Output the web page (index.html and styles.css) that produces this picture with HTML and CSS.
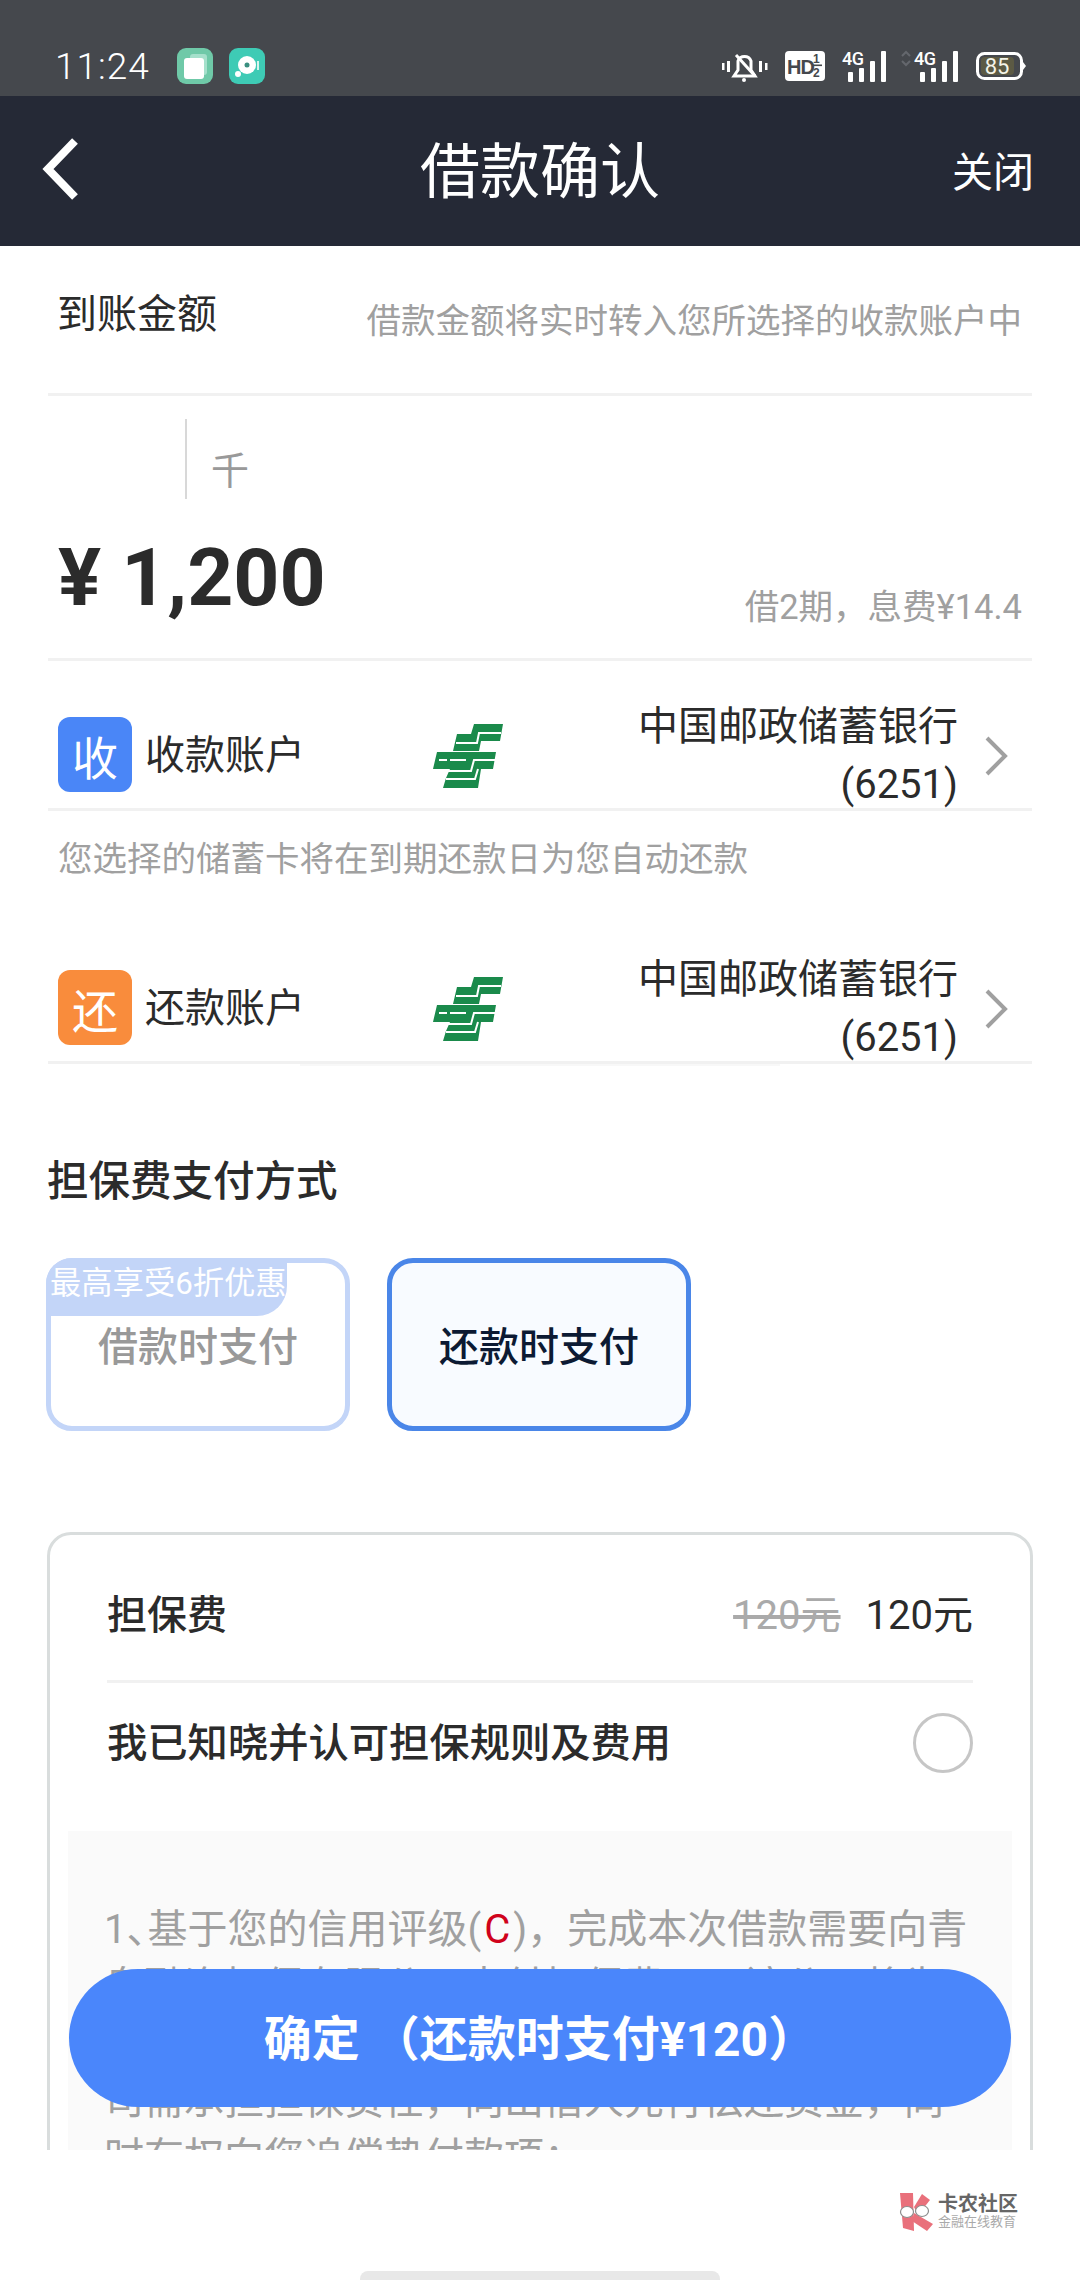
FILE: index.html

```html
<!DOCTYPE html>
<html lang="zh-CN">
<head>
  <meta charset="UTF-8" />
  <meta name="viewport" content="width=device-width, initial-scale=1.0"/>
  <title>借款确认</title>
  <link rel="stylesheet" href="styles.css">
</head>
<body>
  <svg class="defs" width="0" height="0">
    <symbol id="post-logo" viewBox="0 0 70 64">
      <polygon fill="#1a8a4b" points="41,0 70,0 67,17 48,17 46,27 20,27 24,10 38,10"/>
      <polygon fill="#1a8a4b" points="4,28 63,28 60,45 48,45 45,64 10,64 13,54 17,45 0,45"/>
      <g fill="none" stroke="#fff" stroke-width="2">
        <polyline points="23,19 44,19 46,9 68,9"/>
        <polyline points="6,36 14,36"/>
        <polyline points="17,36 33,36"/>
        <polyline points="15,47 38,47 41,36 62,36"/>
        <polyline points="13,55 42,55 45,45"/>
      </g>
    </symbol>
  </svg>

  <div class="page">
    <!-- Status bar -->
    <div class="status">
      <span class="time">11:24</span>
      <svg class="app-icon" width="36" height="36" viewBox="0 0 36 36">
        <rect width="36" height="36" rx="9" fill="#6fc9a8"/>
        <rect x="13" y="6" width="17" height="21" rx="3" fill="#a5e0cb"/>
        <rect x="7" y="10" width="20" height="21" rx="3" fill="#fff"/>
      </svg>
      <svg class="app-icon" width="36" height="36" viewBox="0 0 36 36">
        <rect width="36" height="36" rx="9" fill="#3ecbb5"/>
        <circle cx="18" cy="17" r="9" fill="#fff"/>
        <circle cx="18" cy="17" r="2.5" fill="#3a8f80"/>
        <circle cx="9" cy="26" r="3" fill="#fff"/>
        <rect x="28" y="13" width="2" height="9" fill="#d6f4ee"/>
      </svg>
      <div class="status-right">
        <svg width="46" height="32" viewBox="0 0 46 32">
          <g fill="#fff">
            <rect x="0" y="13" width="2.5" height="7"/>
            <rect x="5" y="11" width="3" height="11"/>
            <rect x="37" y="11" width="3" height="11"/>
            <rect x="43" y="13" width="2.5" height="7"/>
            <circle cx="22" cy="30" r="2"/>
          </g>
          <path d="M12 26 H33 L29 20 V11 A7 7 0 0 0 16 11 V20 Z" fill="none" stroke="#fff" stroke-width="3"/>
          <path d="M14 5 L33 26" stroke="#fff" stroke-width="3"/>
        </svg>
        <svg class="gap-hd" width="40" height="30" viewBox="0 0 40 30">
          <rect width="40" height="30" rx="4" fill="#fff"/>
          <text x="2" y="23" class="hd-text">HD</text>
          <text x="28" y="12" class="hd-frac">1</text>
          <text x="28" y="26" class="hd-frac">2</text>
          <rect x="27" y="13.5" width="10" height="1.6" fill="#45484d"/>
        </svg>
        <svg class="gap-sim" width="45" height="32" viewBox="0 0 45 32">
          <text x="0" y="15" class="net-text">4G</text>
          <g fill="#fff">
            <rect x="6" y="22" width="5" height="10" rx="1"/>
            <rect x="17" y="18" width="5" height="14" rx="1"/>
            <rect x="28" y="11" width="5" height="21" rx="1"/>
            <rect x="39" y="1" width="5" height="31" rx="1"/>
          </g>
        </svg>
        <svg class="gap-sim2" width="58" height="32" viewBox="0 0 58 32">
          <path d="M1 6 L5 2 L9 6 M1 11 L5 15 L9 11" fill="none" stroke="#64676d" stroke-width="2"/>
          <text x="13" y="15" class="net-text">4G</text>
          <g fill="#fff">
            <rect x="19" y="22" width="5" height="10" rx="1"/>
            <rect x="30" y="18" width="5" height="14" rx="1"/>
            <rect x="41" y="11" width="5" height="21" rx="1"/>
            <rect x="52" y="1" width="5" height="31" rx="1"/>
          </g>
        </svg>
        <svg class="gap-batt" width="50" height="28" viewBox="0 0 50 28">
          <rect x="1.5" y="1.5" width="44" height="25" rx="7" fill="none" stroke="#fff" stroke-width="3"/>
          <rect x="5" y="5" width="33" height="18" rx="4" fill="#5c5a44"/>
          <path d="M47 10 L50 14 L47 18 Z" fill="#fff"/>
          <text x="21" y="22" class="batt-text">85</text>
        </svg>
      </div>
    </div>

    <!-- Nav bar -->
    <div class="nav">
      <svg class="back" width="38" height="64" viewBox="0 0 38 64">
        <polyline points="33,4 6,32 33,60" fill="none" stroke="#fff" stroke-width="8"/>
      </svg>
      <div class="nav-title">借款确认</div>
      <div class="nav-close">关闭</div>
    </div>

    <div class="content">
      <div class="amount-head">
        <span class="amount-label">到账金额</span>
        <span class="hint amount-hint">借款金额将实时转入您所选择的收款账户中</span>
      </div>

      <div class="amount">
        <div class="unit-row">
          <span class="caret"></span>
          <span class="unit">千</span>
        </div>
        <div class="value-row">
          <span class="value">¥ 1,200</span>
          <span class="hint value-hint">借2期，息费¥14.4</span>
        </div>
      </div>

      <div class="acct-row">
        <span class="badge badge-blue">收</span>
        <span class="acct-label">收款账户</span>
        <svg class="bank-logo" width="70" height="64"><use href="#post-logo"/></svg>
        <div class="bank">中国邮政储蓄银行<br>(6251)</div>
        <svg class="chevron" width="23" height="40" viewBox="0 0 23 40">
          <polyline points="2,2 20,20 2,38" fill="none" stroke="#a0a0a0" stroke-width="4"/>
        </svg>
      </div>
      <p class="hint note">您选择的储蓄卡将在到期还款日为您自动还款</p>
      <div class="acct-row">
        <span class="badge badge-orange">还</span>
        <span class="acct-label">还款账户</span>
        <svg class="bank-logo" width="70" height="64"><use href="#post-logo"/></svg>
        <div class="bank">中国邮政储蓄银行<br>(6251)</div>
        <svg class="chevron" width="23" height="40" viewBox="0 0 23 40">
          <polyline points="2,2 20,20 2,38" fill="none" stroke="#a0a0a0" stroke-width="4"/>
        </svg>
      </div>
      <div class="row-shade"></div>

      <h2 class="pay-title">担保费支付方式</h2>
      <div class="pay-options">
        <div class="pay-option">
          <span class="pay-tag">最高享受6折优惠</span>
          借款时支付
        </div>
        <div class="pay-option active">还款时支付</div>
      </div>

      <div class="fee-card">
        <div class="fee-row">
          <span>担保费</span>
          <span class="fee-price"><s>120元</s><span>120元</span></span>
        </div>
        <div class="agree-row">
          <span class="agree-text">我已知晓并认可担保规则及费用</span>
          <span class="radio"></span>
        </div>
        <div class="terms">
          1<span class="tight">、</span>基于您的信用评级(<span class="grade">C</span>)，完成本次借款需要向青<br>
          岛融资担保有限公司支付担保费用，该公司将为<br>
          您提供连带责任保证，如您未按期还款，该公<br>
          司需承担担保责任，向出借人先行偿还资金，同<br>
          时有权向您追偿垫付款项；
        </div>
      </div>
    </div>

    <button class="confirm">确定 （还款时支付¥120）</button>

    <div class="footer">
      <div class="mark">
        <svg width="36" height="38" viewBox="0 0 36 38">
          <g fill="#e9707b">
            <polygon points="1,0 14,0 15,38 4,35"/>
            <polygon points="15,14 23,1 31,7 19,22"/>
            <polygon points="15,20 34,31 28,38 13,28"/>
          </g>
          <g fill="#fff" stroke="#8d8d8d" stroke-width="1.2">
            <ellipse cx="8" cy="19" rx="6.5" ry="5.5"/>
            <ellipse cx="23" cy="18" rx="6.5" ry="5.5"/>
          </g>
        </svg>
        <div class="mark-text">
          <span class="mark-name">卡农社区</span>
          <span class="mark-sub">金融在线教育</span>
        </div>
      </div>
      <div class="home-bar"></div>
    </div>
  </div>
</body>
</html>
```

FILE: styles.css

```css
* {
  box-sizing: border-box;
}

body {
  margin: 0;
  background-color: #fff;
  font-family: Roboto, "Noto Sans CJK SC", sans-serif;
  color: #2b2b2b;
}

.defs {
  position: absolute;
}

.page {
  position: relative;
  width: 1080px;
  height: 2280px;
  overflow: hidden;
  background-color: #fff;
}

/* Status bar */
.status {
  display: flex;
  align-items: center;
  height: 96px;
  padding: 36px 54px 0 55px;
  background-color: #45484d;
  color: #fff;
}

.status svg {
  overflow: visible;
}

.time {
  font-size: 37px;
  font-weight: 300;
  letter-spacing: 1px;
  margin-right: 27px;
}

.app-icon {
  margin-right: 16px;
}

.status-right {
  display: flex;
  align-items: center;
  margin-left: auto;
}

.gap-hd {
  margin-left: 17px;
}

.gap-sim {
  margin-left: 17px;
}

.gap-sim2 {
  margin-left: 14px;
}

.gap-batt {
  margin-left: 17px;
}

.hd-text {
  font: bold 20px "Liberation Sans", sans-serif;
  fill: #45484d;
  letter-spacing: -1px;
}

.hd-frac {
  font: bold 12px "Liberation Sans", sans-serif;
  fill: #45484d;
}

.net-text {
  font: 500 18px Roboto, sans-serif;
  fill: #fff;
  letter-spacing: -0.5px;
}

.batt-text {
  font: 22px Roboto, sans-serif;
  fill: #f4f4e8;
  text-anchor: middle;
}

/* Nav bar */
.nav {
  display: grid;
  grid-template-columns: 1fr auto 1fr;
  align-items: center;
  height: 150px;
  padding: 0 46px;
  background-color: #252936;
  color: #fff;
}

.back {
  margin: -4px 0 0 -4px;
}

.nav-title {
  margin-top: 4px;
  font-size: 60px;
  line-height: 1;
}

.nav-close {
  margin-top: 4px;
  font-size: 41px;
  line-height: 1;
  text-align: right;
}

/* Scrolling area */
.content {
  height: 1904px;
  overflow: hidden;
}

.hint {
  font-size: 34.5px;
  line-height: 34px;
  color: #a0a0a0;
}

.amount-head {
  display: flex;
  justify-content: space-between;
  align-items: flex-start;
  height: 150px;
  margin: 0 48px;
  padding: 0 10px 0 9px;
  border-bottom: 3px solid #f1f1f1;
}

.amount-label {
  margin-top: 49px;
  font-size: 40px;
  line-height: 40px;
}

.amount-hint {
  margin-top: 58px;
}

.amount {
  margin: 0 48px;
  padding-bottom: 39px;
  border-bottom: 3px solid #f1f1f1;
}

.unit-row {
  display: flex;
  height: 103px;
  padding-top: 23px;
  padding-left: 137px;
}

.caret {
  width: 2px;
  height: 80px;
  background-color: #d8d8d8;
}

.unit {
  align-self: flex-end;
  margin-left: 24px;
  margin-bottom: 9px;
  font-size: 38px;
  line-height: 38px;
  color: #999;
}

.value-row {
  display: flex;
  justify-content: space-between;
  align-items: flex-start;
  height: 82px;
  margin-top: 38px;
  padding: 0 10px;
}

.value {
  font-size: 80.5px;
  line-height: 82px;
  font-weight: 700;
}

.value-hint {
  margin-top: 53px;
}

/* Account rows */
.acct-row {
  display: flex;
  align-items: center;
  height: 150px;
  margin: 0 48px;
  padding: 43px 24px 0 10px;
  border-bottom: 3px solid #f1f1f1;
}

.badge {
  display: flex;
  align-items: center;
  justify-content: center;
  flex: none;
  width: 74px;
  height: 75px;
  margin-bottom: 3px;
  border-radius: 12px;
  color: #fff;
  font-size: 46px;
}

.badge-blue {
  background-color: #4a86f7;
}

.badge-orange {
  background-color: #f98c3c;
}

.acct-label {
  width: 301px;
  padding-left: 13px;
  font-size: 40px;
  line-height: 1;
}

.bank-logo {
  flex: none;
}

.bank {
  flex: 1;
  text-align: right;
  font-size: 40px;
  line-height: 58px;
}

.chevron {
  flex: none;
  margin-left: 27px;
}

.note {
  height: 103px;
  margin: 0;
  padding: 31px 0 0 58px;
}

.row-shade {
  width: 480px;
  height: 2px;
  margin: 0 auto;
  background-color: #f8f8f8;
}

/* Fee payment choice */
.pay-title {
  margin: 95px 0 0 47px;
  font-size: 41.5px;
  line-height: 42px;
  font-weight: 500;
}

.pay-options {
  display: flex;
  gap: 37px;
  margin-top: 55px;
  padding-left: 46px;
}

.pay-option {
  position: relative;
  display: flex;
  align-items: center;
  justify-content: center;
  width: 304px;
  height: 173px;
  padding-bottom: 2px;
  border: 5px solid #c3d5f8;
  border-radius: 26px;
  font-size: 40px;
  font-weight: 500;
  color: #999;
}

.pay-option.active {
  border-color: #4a86e8;
  background-color: #f8fbff;
  color: #0c1a33;
}

.pay-tag {
  position: absolute;
  top: -5px;
  left: -5px;
  width: 241px;
  height: 58px;
  padding: 6px 0 0 4px;
  border-radius: 26px 0 30px 0;
  background-color: #c3d5f8;
  color: #fff;
  font-size: 31.3px;
  line-height: 40px;
  font-weight: 400;
  white-space: nowrap;
}

/* Fee card */
.fee-card {
  height: 700px;
  margin: 101px 47px 0;
  border: 3px solid #d9dddd;
  border-radius: 24px;
}

.fee-row {
  display: flex;
  justify-content: space-between;
  align-items: center;
  height: 148px;
  margin: 0 57px;
  padding-top: 8px;
  border-bottom: 3px solid #f1f1f1;
  font-size: 40px;
  font-weight: 500;
}

.fee-price {
  font-weight: 400;
}

.fee-price s {
  margin-right: 25px;
  color: #aaa;
}

.agree-row {
  display: flex;
  justify-content: space-between;
  align-items: center;
  margin: 27px 57px 56px;
  font-size: 40.3px;
  font-weight: 500;
}

.agree-text {
  margin-bottom: 6px;
}

.radio {
  width: 60px;
  height: 60px;
  border: 3px solid #c6c6c6;
  border-radius: 50%;
}

.terms {
  height: 500px;
  margin: 0 18px;
  padding: 70px 0 0 36px;
  background-color: #fafafa;
  color: #a0a0a0;
  font-size: 40px;
  line-height: 57px;
  white-space: nowrap;
}

.tight {
  letter-spacing: -19px;
}

.grade {
  padding: 0 3px;
  color: #d0021b;
}

/* Confirm button sits over the scrolling area */
.confirm {
  position: absolute;
  top: 1969px;
  left: 69px;
  width: 942px;
  height: 138px;
  padding-bottom: 8px;
  border: none;
  border-radius: 69px;
  background-color: #4a86fb;
  color: #fff;
  font-family: inherit;
  font-size: 48px;
  font-weight: 700;
}

/* Footer */
.footer {
  display: flex;
  flex-direction: column;
  height: 130px;
}

.mark {
  display: flex;
  justify-content: flex-end;
  gap: 3px;
  padding: 43px 62px 0 0;
}

.mark-text {
  display: flex;
  flex-direction: column;
  align-items: flex-start;
}

.mark-name {
  font-size: 20px;
  line-height: 22px;
  font-weight: 700;
  color: #666;
}

.mark-sub {
  font-size: 13px;
  line-height: 14px;
  color: #aaa;
}

.home-bar {
  align-self: center;
  width: 360px;
  height: 9px;
  margin-top: auto;
  border-radius: 8px 8px 0 0;
  background-color: #e8e8e8;
}
```
